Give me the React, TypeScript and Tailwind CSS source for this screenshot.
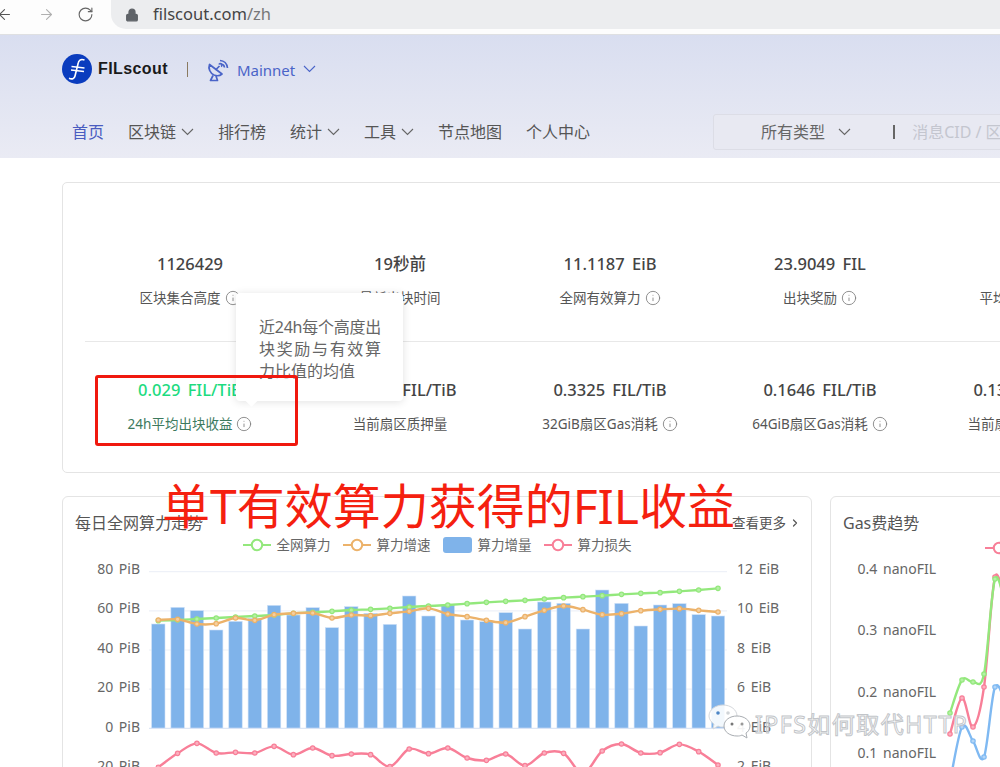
import { ArrowLeft, ArrowRight, ChevronRight, Info, Lock, RotateCw } from "lucide-react";

const font = "font-['Noto_Sans','Noto_Sans_CJK_SC',sans-serif]";

const barTops = [
  432, 382, 392, 450, 424, 415, 376, 405, 383, 443, 380, 400, 433, 348, 408, 375, 420, 425, 398, 447, 366, 370, 447,
  330, 370, 438, 375, 371, 404, 408,
];
const greenLine = [
  422, 420, 417, 414, 411, 408, 405, 400, 397, 394, 390, 388, 385, 381, 378, 375, 371, 367, 364, 361, 357, 353, 350,
  347, 343, 340, 338, 334, 330, 325,
];
const orangeLine = [
  420, 418, 432, 431, 414, 421, 404, 400, 399, 414, 405, 407, 400, 394, 385, 402, 410, 421, 428, 410, 391, 378, 389,
  404, 401, 392, 388, 386, 391, 396,
];
const pinkLine = [
  862, 820, 790, 819, 817, 819, 799, 824, 804, 827, 822, 824, 860, 807, 821, 804, 834, 841, 822, 857, 819, 820, 880,
  813, 792, 819, 818, 793, 815, 855,
];

const toX = (i: number) => 158.3 + i * 19.3;
const toY = (v: number) => 480 + v / 3;

// catmull-rom through the points, good enough for the echarts "smooth" look
function smooth(pts: [number, number][]) {
  let d = `M${pts[0][0]} ${pts[0][1]}`;
  for (let i = 0; i < pts.length - 1; i++) {
    const p0 = pts[i - 1] || pts[i];
    const p1 = pts[i];
    const p2 = pts[i + 1];
    const p3 = pts[i + 2] || p2;
    const c1x = p1[0] + (p2[0] - p0[0]) / 6;
    const c1y = p1[1] + (p2[1] - p0[1]) / 6;
    const c2x = p2[0] - (p3[0] - p1[0]) / 6;
    const c2y = p2[1] - (p3[1] - p1[1]) / 6;
    d += ` C${c1x} ${c1y} ${c2x} ${c2y} ${p2[0]} ${p2[1]}`;
  }
  return d;
}

function Series({ pts, color, fill }: { pts: [number, number][]; color: string; fill: string }) {
  return (
    <g>
      <path d={smooth(pts)} fill="none" stroke={color} strokeWidth="2.4" />
      {pts.map((p, i) => (
        <circle key={i} cx={p[0]} cy={p[1]} r="2.2" fill={fill} stroke={color} strokeWidth="1.2" />
      ))}
    </g>
  );
}

function PowerChart() {
  const gridY = [571.7, 610.8, 650, 689.2, 728.3];
  const left = ["80 PiB", "60 PiB", "40 PiB", "20 PiB", "0 PiB", "20 PiB"];
  const right = ["12 EiB", "10 EiB", "8 EiB", "6 EiB", "4 EiB", "2 EiB"];
  const series = (vals: number[]) => vals.map((v, i) => [toX(i), toY(v)] as [number, number]);
  return (
    <svg viewBox="63 558 747 232" className="block w-[747px] h-[232px]">
      {gridY.map((y, i) => (
        <line key={y} x1="149" x2="727" y1={y} y2={y} stroke={i === 4 ? "#dde6f5" : "#eef1f8"} strokeWidth="1.2" />
      ))}
      {barTops.map((t, i) => (
        <rect
          key={i}
          x={toX(i) - 6.7}
          y={toY(t)}
          width="13.4"
          height={728 - toY(t)}
          fill="#7fb3ea"
          stroke="#cfe2f7"
          strokeWidth="0.6"
        />
      ))}
      <Series pts={series(greenLine)} color="#93e87c" fill="#b5f0a4" />
      <Series pts={series(orangeLine)} color="#ecb26a" fill="#f5cf9f" />
      <Series pts={series(pinkLine)} color="#f87f98" fill="#fbb1c0" />
      {left.map((t, i) => (
        <text key={i} x="140" y={574 + i * 39.4} textAnchor="end" fontSize="14" fill="#666" wordSpacing="2">
          {t}
        </text>
      ))}
      {right.map((t, i) => (
        <text key={i} x="737" y={574 + i * 39.4} fontSize="14" fill="#666" wordSpacing="2">
          {t}
        </text>
      ))}
    </svg>
  );
}

function GasChart() {
  const labels = ["0.4 nanoFIL", "0.3 nanoFIL", "0.2 nanoFIL", "0.1 nanoFIL"];
  return (
    <svg viewBox="831 558 300 232" className="block w-[300px] h-[232px]">
      {labels.map((t, i) => (
        <text key={t} x="936" y={574 + i * 61.4} textAnchor="end" fontSize="14" fill="#666" wordSpacing="2">
          {t}
        </text>
      ))}
      <Series
        pts={[[950, 734], [962, 698], [973, 727], [984, 687], [995, 577], [1006, 610]]}
        color="#f87f98"
        fill="#fbb1c0"
      />
      <Series
        pts={[[950, 713], [962, 680], [973, 682], [984, 674], [995, 579], [1006, 610]]}
        color="#93e87c"
        fill="#b5f0a4"
      />
      <Series
        pts={[[950, 782], [962, 727], [973, 741], [984, 757], [995, 687], [1006, 705]]}
        color="#7fb9f2"
        fill="#b3d6f8"
      />
    </svg>
  );
}

function Chevron({ className }: { className?: string }) {
  return (
    <svg width="13" height="8" viewBox="0 0 13 8" fill="none" className={className}>
      <path d="M1 1l5.500 5.500L12 1" stroke="currentColor" strokeWidth="1.100" />
    </svg>
  );
}

function LegendLine({ color, label }: { color: string; label: string }) {
  return (
    <div className="flex items-center gap-[6px]">
      <svg width="28" height="14" viewBox="0 0 28 14">
        <line x1="0" x2="28" y1="7" y2="7" stroke={color} strokeWidth="2" />
        <circle cx="14" cy="7" r="5.2" fill="#fff" stroke={color} strokeWidth="2" />
      </svg>
      <span className="text-[13.5px] text-[#666]">{label}</span>
    </div>
  );
}

function Stat({ value, label, info = true, green }: { value: string; label: string; info?: boolean; green?: boolean }) {
  return (
    <div className="w-[210px] shrink-0 flex flex-col items-center">
      <div
        className={`h-6 leading-6 whitespace-nowrap text-[16.5px] font-medium [word-spacing:3px] ${
          green ? "text-[#1ddb80]" : "text-[#444]"
        }`}
      >
        {value}
      </div>
      <div
        className={`mt-[12px] h-5 flex items-center gap-[4px] whitespace-nowrap text-[13.5px] ${
          green ? "text-[#3d7a5e]" : "text-[#555]"
        }`}
      >
        {label}
        {info && <Info size={16} strokeWidth={1.3} className="text-[#808080]" />}
      </div>
    </div>
  );
}

function NavItem({ label, active, arrow }: { label: string; active?: boolean; arrow?: boolean }) {
  return (
    <div className={`flex items-center gap-[5px] whitespace-nowrap text-base ${active ? "text-[#4a5cc0]" : "text-[#555]"}`}>
      {label}
      {arrow && <Chevron className="text-[#666]" />}
    </div>
  );
}

export default function App() {
  return (
    <div className={`${font} relative w-[1000px] h-[767px] overflow-hidden bg-white`}>
      {/* browser bar */}
      <div className="h-[35px] border-b border-[#dfe0e2] flex items-start bg-[#fdfdfd]">
        <div className="h-[29px] flex items-center">
          <ArrowLeft size={17} strokeWidth={1.5} className="-ml-[4px] text-[#555]" />
          <ArrowRight size={17} strokeWidth={1.5} className="ml-[25px] text-[#b0b0b0]" />
          <RotateCw size={17} strokeWidth={1.6} className="ml-[22px] text-[#666]" />
        </div>
        <div className="ml-[17px] h-[29px] flex-1 rounded-bl-[15px] bg-[#ecedef] flex items-center pl-[14px]">
          <Lock size={14} strokeWidth={2.4} className="text-[#5f6368] fill-[#5f6368]" />
          <span className="ml-[14px] text-[16.5px] text-[#444]">
            filscout.com<span className="text-[#777]">/zh</span>
          </span>
        </div>
      </div>

      {/* site header */}
      <div className="h-[123px] bg-gradient-to-b from-[#d9def0] to-[#eaebf4] pl-[62px]">
        <div className="h-[68px] flex items-center">
          <svg width="30" height="30" viewBox="0 0 30 30">
            <circle cx="15" cy="15" r="15" fill="#0a3cbe" />
            <path d="M22.500 6c-4-1.500-6 .4-6.500 4l-3 12c-.6 2.800-3 3.600-6 2.300" fill="none" stroke="#fff" strokeWidth="1.600" />
            <path d="M9.500 12.500l13 1.500M9 16l13 1.500" fill="none" stroke="#fff" strokeWidth="1.300" />
          </svg>
          <span className="ml-[6px] font-['Liberation_Sans',sans-serif] font-bold text-base tracking-[0.4px] text-[#1a1a1a]">
            FILscout
          </span>
          <span className="ml-[19px] w-px h-[15px] bg-[#8a7a60]" />
          {/* satellite dish, no package icon has these proportions */}
          <svg width="24" height="24" viewBox="0 0 24 24" fill="none" stroke="#4a64c8" strokeWidth="1.700" className="ml-[18px] mt-[2px]">
            <path d="M3.500 6.500c-1.500 4 .5 8.500 4.500 10.500 3 1.200 6 .8 8-1z" strokeLinejoin="round" />
            <path d="M9.500 12l4-4M15 8.500a1.500 1.500 0 1 0-2-2" />
            <path d="M7 17.500l-2.500 5h7l-1.500-4.500" strokeLinejoin="round" />
            <path d="M14 2.500c4 .2 7 3.200 7.500 7.500M15 6c2 .2 3.300 1.500 3.500 3.500" />
          </svg>
          <span className="ml-[7px] mt-[2px] text-[15px] text-[#4a64c8]">Mainnet</span>
          <Chevron className="ml-[8px] text-[#4a64c8]" />
        </div>
        <div className="mt-[11px] flex items-center">
          <div className="ml-[10px] shrink-0 flex items-center gap-[24px]">
            <NavItem label="首页" active />
            <NavItem label="区块链" arrow />
            <NavItem label="排行榜" />
            <NavItem label="统计" arrow />
            <NavItem label="工具" arrow />
            <NavItem label="节点地图" />
            <NavItem label="个人中心" />
          </div>
          <div className="ml-[123px] w-[400px] h-[36px] shrink-0 rounded-[3px] border border-[#dcdde6] bg-[#e8e9f2] flex items-center pl-[47px] text-base">
            <span className="text-[#666]">所有类型</span>
            <Chevron className="ml-[13px] text-[#666]" />
            <span className="ml-[42px] w-[2px] h-[14px] bg-[#666]" />
            <span className="ml-[17px] text-[#c4c6cf] whitespace-nowrap">消息CID / 区块高度</span>
          </div>
        </div>
      </div>

      {/* stats */}
      <div className="pl-[62px] pt-[24px]">
        <div className="w-[1200px] h-[291px] rounded-[5px] border border-[#e4e4e4] pl-[22px] pt-[69px]">
          <div className="flex">
            <Stat value="1126429" label="区块集合高度" />
            <Stat value="19秒前" label="最新出块时间" info={false} />
            <Stat value="11.1187 EiB" label="全网有效算力" />
            <Stat value="23.9049 FIL" label="出块奖励" />
            <Stat value="" label="平均区块间隔" />
          </div>
          <div className="mt-[33px] mb-[36px] h-px bg-[#e8e8e8]" />
          <div className="flex">
            <Stat value="0.029 FIL/TiB" label="24h平均出块收益" green />
            <Stat value="0.1597 FIL/TiB" label="当前扇区质押量" info={false} />
            <Stat value="0.3325 FIL/TiB" label="32GiB扇区Gas消耗" />
            <Stat value="0.1646 FIL/TiB" label="64GiB扇区Gas消耗" />
            <Stat value="0.1325 FIL/TiB" label="当前扇区Gas消耗" />
          </div>
        </div>

        {/* charts */}
        <div className="mt-[23px] flex gap-[18px]">
          <div className="w-[750px] h-[320px] shrink-0 rounded-[6px] border border-[#e4e4e4]">
            <div className="h-[27px] mt-[14px] pl-[12px] pr-[10px] flex items-start justify-between">
              <span className="text-base leading-[24px] text-[#555]">每日全网算力走势</span>
              <span className="flex items-center text-[13.5px] leading-[24px] text-[#555]">
                查看更多
                <ChevronRight size={12} strokeWidth={2.4} className="ml-[3px]" />
              </span>
            </div>
            <div className="h-[14px] flex items-center justify-center gap-[12px]">
              <LegendLine color="#93e87c" label="全网算力" />
              <LegendLine color="#ecb26a" label="算力增速" />
              <div className="flex items-center gap-[6px]">
                <span className="w-[29px] h-[16px] rounded-[3px] bg-[#7fb3ea]" />
                <span className="text-[13.5px] text-[#666]">算力增量</span>
              </div>
              <LegendLine color="#f87f98" label="算力损失" />
            </div>
            <div className="mt-[6px]">
              <PowerChart />
            </div>
          </div>
          <div className="w-[400px] h-[320px] shrink-0 rounded-[6px] border border-[#e4e4e4]">
            <div className="h-[27px] mt-[14px] px-[12px] text-base leading-[24px] text-[#555]">Gas费趋势</div>
            <div className="h-[14px] pl-[154px]">
              <LegendLine color="#f87f98" label="平均" />
            </div>
            <div className="mt-[6px]">
              <GasChart />
            </div>
          </div>
        </div>
      </div>

      {/* tooltip over the stat cards */}
      <div className="absolute left-[236px] top-[293px] w-[167px] h-[108px] rounded-[4px] bg-white shadow-[0_1px_8px_rgba(0,0,0,0.12)] pl-[23px] pt-[23px] text-base leading-[22px] text-[#666]">
        <div className="w-[122px] whitespace-nowrap tracking-[-0.25px]">近24h每个高度出</div>
        <div className="w-[122px] [text-align-last:justify]">块奖励与有效算</div>
        <div>力比值的均值</div>
        <span className="absolute left-[11px] -bottom-[4px] w-[9px] h-[9px] rotate-45 bg-white" />
      </div>

      {/* red annotation */}
      <div className="absolute left-[95px] top-[375px] w-[203px] h-[71px] rounded-[3px] border-[3px] border-[#f0180e]" />
      <div className="absolute left-[162px] top-[472px] text-[48px] leading-[68px] whitespace-nowrap text-[#f5200f]">
        单T有效算力获得的FIL收益
      </div>

      {/* wechat watermark */}
      <div className="absolute left-[708px] top-[704px] flex items-start pointer-events-none">
        <svg width="44" height="36" viewBox="0 0 44 36">
          <path d="M15 1c8 0 14 5 14 11 0 6-6 11-14 11-2 0-3 0-5-1l-5 3 1-5c-3-2-5-5-5-8C1 6 7 1 15 1z" fill="#fff" fillOpacity="0.9" stroke="#d5d8dc" />
          <circle cx="10" cy="9" r="1.800" fill="#4d86c6" />
          <circle cx="20" cy="9" r="1.800" fill="#d0d4d8" />
          <path d="M29 12c7 0 13 4 13 10 0 3-2 6-4 7l1 5-5-3c-2 1-3 1-5 1-7 0-13-4-13-10s6-10 13-10z" fill="#fff" fillOpacity="0.92" stroke="#a9adb2" />
          <circle cx="24" cy="20" r="1.500" fill="#777" />
          <circle cx="34" cy="20" r="1.500" fill="#999" />
        </svg>
        <span className="ml-[3px] mt-[6px] text-[23px] leading-[28px] tracking-[1.5px] whitespace-nowrap text-white/50 [-webkit-text-stroke:1px_#c2c5c9]">
          IPFS如何取代HTTP
        </span>
      </div>
    </div>
  );
}
